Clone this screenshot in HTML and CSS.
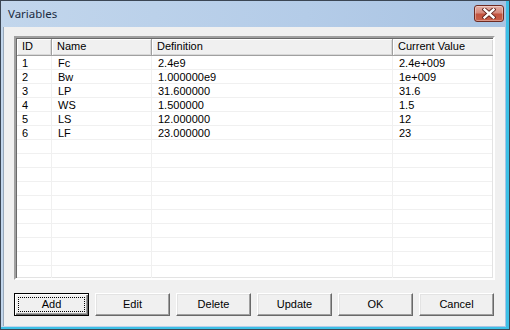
FILE: index.html
```html
<!DOCTYPE html>
<html>
<head>
<meta charset="utf-8">
<link rel="stylesheet" href="styles.css">
</head>
<body>
<div class="window">
  <div class="titlebar">
    <span class="title">Variables</span>
    <div class="close">
      <svg width="14" height="11" viewBox="0 0 14 11">
        <path d="M2.5 1.5 L11.5 9.5 M11.5 1.5 L2.5 9.5" stroke="#5a1f18" stroke-width="4.2" stroke-linecap="square" fill="none"/>
        <path d="M2.5 1.5 L11.5 9.5 M11.5 1.5 L2.5 9.5" stroke="#ffffff" stroke-width="2.4" stroke-linecap="square" fill="none"/>
      </svg>
    </div>
  </div>
  <div class="client">
    <div class="list">
      <div class="header">
        <div class="hcell">ID</div>
        <div class="hcell">Name</div>
        <div class="hcell">Definition</div>
        <div class="hcell">Current Value</div>
      </div>
      <div class="rows">
        <div class="row"><div class="cell">1</div><div class="cell">Fc</div><div class="cell">2.4e9</div><div class="cell">2.4e+009</div></div>
        <div class="row"><div class="cell">2</div><div class="cell">Bw</div><div class="cell">1.000000e9</div><div class="cell">1e+009</div></div>
        <div class="row"><div class="cell">3</div><div class="cell">LP</div><div class="cell">31.600000</div><div class="cell">31.6</div></div>
        <div class="row"><div class="cell">4</div><div class="cell">WS</div><div class="cell">1.500000</div><div class="cell">1.5</div></div>
        <div class="row"><div class="cell">5</div><div class="cell">LS</div><div class="cell">12.000000</div><div class="cell">12</div></div>
        <div class="row"><div class="cell">6</div><div class="cell">LF</div><div class="cell">23.000000</div><div class="cell">23</div></div>
        <div class="row"><div class="cell"></div><div class="cell"></div><div class="cell"></div><div class="cell"></div></div>
        <div class="row"><div class="cell"></div><div class="cell"></div><div class="cell"></div><div class="cell"></div></div>
        <div class="row"><div class="cell"></div><div class="cell"></div><div class="cell"></div><div class="cell"></div></div>
        <div class="row"><div class="cell"></div><div class="cell"></div><div class="cell"></div><div class="cell"></div></div>
        <div class="row"><div class="cell"></div><div class="cell"></div><div class="cell"></div><div class="cell"></div></div>
        <div class="row"><div class="cell"></div><div class="cell"></div><div class="cell"></div><div class="cell"></div></div>
        <div class="row"><div class="cell"></div><div class="cell"></div><div class="cell"></div><div class="cell"></div></div>
        <div class="row"><div class="cell"></div><div class="cell"></div><div class="cell"></div><div class="cell"></div></div>
        <div class="row"><div class="cell"></div><div class="cell"></div><div class="cell"></div><div class="cell"></div></div>
        <div class="row"><div class="cell"></div><div class="cell"></div><div class="cell"></div><div class="cell"></div></div>
        <div class="row"><div class="cell"></div><div class="cell"></div><div class="cell"></div><div class="cell"></div></div>
      </div>
    </div>
    <div class="buttons">
      <div class="btn default"><span class="focus">Add</span></div>
      <div class="btn">Edit</div>
      <div class="btn">Delete</div>
      <div class="btn">Update</div>
      <div class="btn">OK</div>
      <div class="btn">Cancel</div>
    </div>
  </div>
</div>
</body>
</html>
```
FILE: styles.css
```css
html, body {
  margin: 0;
  padding: 0;
  background: #ffffff;
}
.window {
  position: relative;
  width: 510px;
  height: 330px;
  box-sizing: border-box;
  border: 1px solid #3b4654;
  background: linear-gradient(to right, #c2d6ec 0%, #b4cce8 60%, #a9c3e2 100%);
  box-shadow: inset -3px -2px 0 0 #3cc0e6;
  display: flex;
  flex-direction: column;
  font-family: "Liberation Sans", Arial, sans-serif;
  font-size: 11px;
  color: #000;
}
.titlebar {
  height: 26px;
  flex: none;
  display: flex;
  align-items: center;
  padding-left: 7px;
  padding-bottom: 1px;
  box-sizing: border-box;
}
.title {
  font-family: "Noto Sans", "Open Sans", sans-serif;
  font-size: 11.5px;
  color: #1b2b3f;
}
.close {
  position: absolute;
  right: 5px;
  top: 4px;
  width: 30px;
  height: 17px;
  box-sizing: border-box;
  border: 1px solid #6e2a22;
  border-radius: 3px;
  background: linear-gradient(to bottom, #e4b0a6 0%, #d68a7d 45%, #c2533f 55%, #c8604a 100%);
  box-shadow: inset 0 0 0 1px rgba(255,255,255,0.35);
  display: flex;
  align-items: center;
  justify-content: center;
}
.close svg {
  display: block;
}
.client {
  flex: 1;
  margin: 0 4px 3px 2px;
  border-left: 1px solid #9aaabb;
  background: #f0f0f0;
  padding: 9px 10px 10px 10px;
  display: flex;
  flex-direction: column;
  gap: 13px;
}
.list {
  width: 481px;
  height: 244px;
  box-sizing: border-box;
  border-style: solid;
  border-width: 2px;
  border-color: #a0a0a0 #ffffff #ffffff #a0a0a0;
  box-shadow: inset 1px 1px 0 #696969, inset -1px -1px 0 #e3e3e3;
  background: #ffffff;
  overflow: hidden;
  display: flex;
  flex-direction: column;
  padding: 1px 1px 0 1px;
}
.header, .row {
  display: grid;
  grid-template-columns: 35px 100px 241px 101px;
}
.header {
  height: 17px;
  flex: none;
}
.hcell {
  box-sizing: border-box;
  background: #f0f0f0;
  border-right: 1px solid #a0a0a0;
  border-bottom: 1px solid #a0a0a0;
  box-shadow: inset 1px 1px 0 #ffffff, inset -1px -1px 0 #d8d8d8;
  padding-left: 5px;
  line-height: 15px;
  white-space: nowrap;
  overflow: hidden;
}
.hcell:first-child {
  padding-left: 5px;
}
.rows {
  flex: 1;
  overflow: hidden;
}
.row {
  height: 14px;
  box-sizing: border-box;
  border-bottom: 1px solid #f0f0f0;
}
.cell {
  box-sizing: border-box;
  border-right: 1px solid #f0f0f0;
  padding-left: 6px;
  line-height: 14px;
  white-space: nowrap;
  overflow: hidden;
}
.row .cell:first-child {
  padding-left: 5px;
}
.buttons {
  display: flex;
  gap: 6px;
}
.btn {
  width: 75px;
  height: 23px;
  box-sizing: border-box;
  background: #f0f0f0;
  border: 1px solid;
  border-color: #ffffff #696969 #696969 #ffffff;
  box-shadow: inset -1px -1px 0 #a0a0a0, inset 1px 1px 0 #e3e3e3;
  display: flex;
  align-items: center;
  justify-content: center;
  line-height: 13px;
}
.btn.default {
  border: 1px solid #000000;
  box-shadow: inset 1px 1px 0 #ffffff, inset -1px -1px 0 #696969, inset -2px -2px 0 #a0a0a0;
  padding: 3px;
}
.focus {
  flex: 1;
  align-self: stretch;
  border: 1px dotted #000000;
  display: flex;
  align-items: center;
  justify-content: center;
}
```
